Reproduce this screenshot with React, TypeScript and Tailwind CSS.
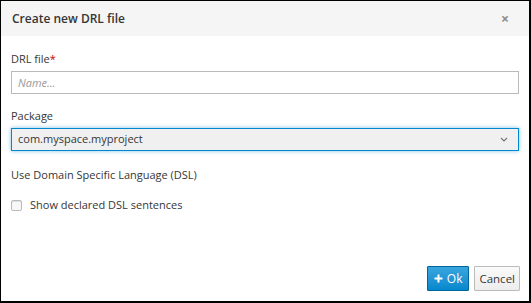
import React from 'react';

const App = () => {
  return (
    <div
      className="w-[531px] h-[303px] bg-white border-l border-t border-black border-r-2 border-b-2 flex flex-col text-[11px] text-[#363636]"
      style={{ fontFamily: '"Open Sans", "Liberation Sans", sans-serif' }}
    >
      {/* Header */}
      <div className="h-[35px] bg-[#f5f5f5] flex items-center justify-between pl-[11px] pr-[20px]">
        <h1 className="text-[12px] font-semibold text-[#363636]">Create new DRL file</h1>
        <span className="text-[14px] font-bold text-[#8b8d8f] leading-none">×</span>
      </div>

      {/* Body */}
      <div className="flex-1 px-[10px] pt-[14px]">
        <label className="block leading-[18px] mb-[3px]">
          DRL file<span className="text-[#c00]">*</span>
        </label>
        <input
          className="w-full h-[23px] border border-[#bbb] px-[6px] text-[11px] italic placeholder:text-[#999] outline-none"
          placeholder="Name..."
        />

        <label className="block leading-[18px] mt-[13px] mb-[3px]">Package</label>
        <div className="w-full h-[23px] border border-[#0088ce] bg-[#f0f0f0] shadow-[0_0_4px_rgba(0,136,206,0.5)] flex items-center justify-between px-[6px]">
          <span>com.myspace.myproject</span>
          <svg width="8" height="5" viewBox="0 0 8 5" className="mr-[4px]">
            <path d="M1 1l3 3 3-3" fill="none" stroke="#777" strokeWidth="1.2" />
          </svg>
        </div>

        <div className="leading-[18px] mt-[15px]">Use Domain Specific Language (DSL)</div>

        <label className="flex items-center gap-[8px] mt-[12px] leading-[18px]">
          <span className="w-[11px] h-[11px] border border-[#bbb] rounded-[2px] bg-[#f8f8f8] shadow-[inset_0_1px_1px_rgba(0,0,0,0.1)]" />
          <span>Show declared DSL sentences</span>
        </label>
      </div>

      {/* Footer */}
      <div className="flex justify-end gap-[5px] pr-[9px] pb-[10px]">
        <button className="h-[25px] px-[6px] flex items-center gap-[4px] bg-[#0088ce] border border-[#00659c] text-white text-[12px] rounded-[1px] bg-gradient-to-b from-[#39a5dc] to-[#0088ce]">
          <svg width="9" height="9" viewBox="0 0 9 9">
            <path d="M4.5 0.5v8M0.5 4.5h8" stroke="#fff" strokeWidth="2" />
          </svg>
          Ok
        </button>
        <button className="h-[25px] px-[4px] bg-gradient-to-b from-[#fafafa] to-[#ededed] border border-[#bbb] text-[#363636] text-[11.5px] rounded-[1px]">
          Cancel
        </button>
      </div>
    </div>
  );
};

export default App;
